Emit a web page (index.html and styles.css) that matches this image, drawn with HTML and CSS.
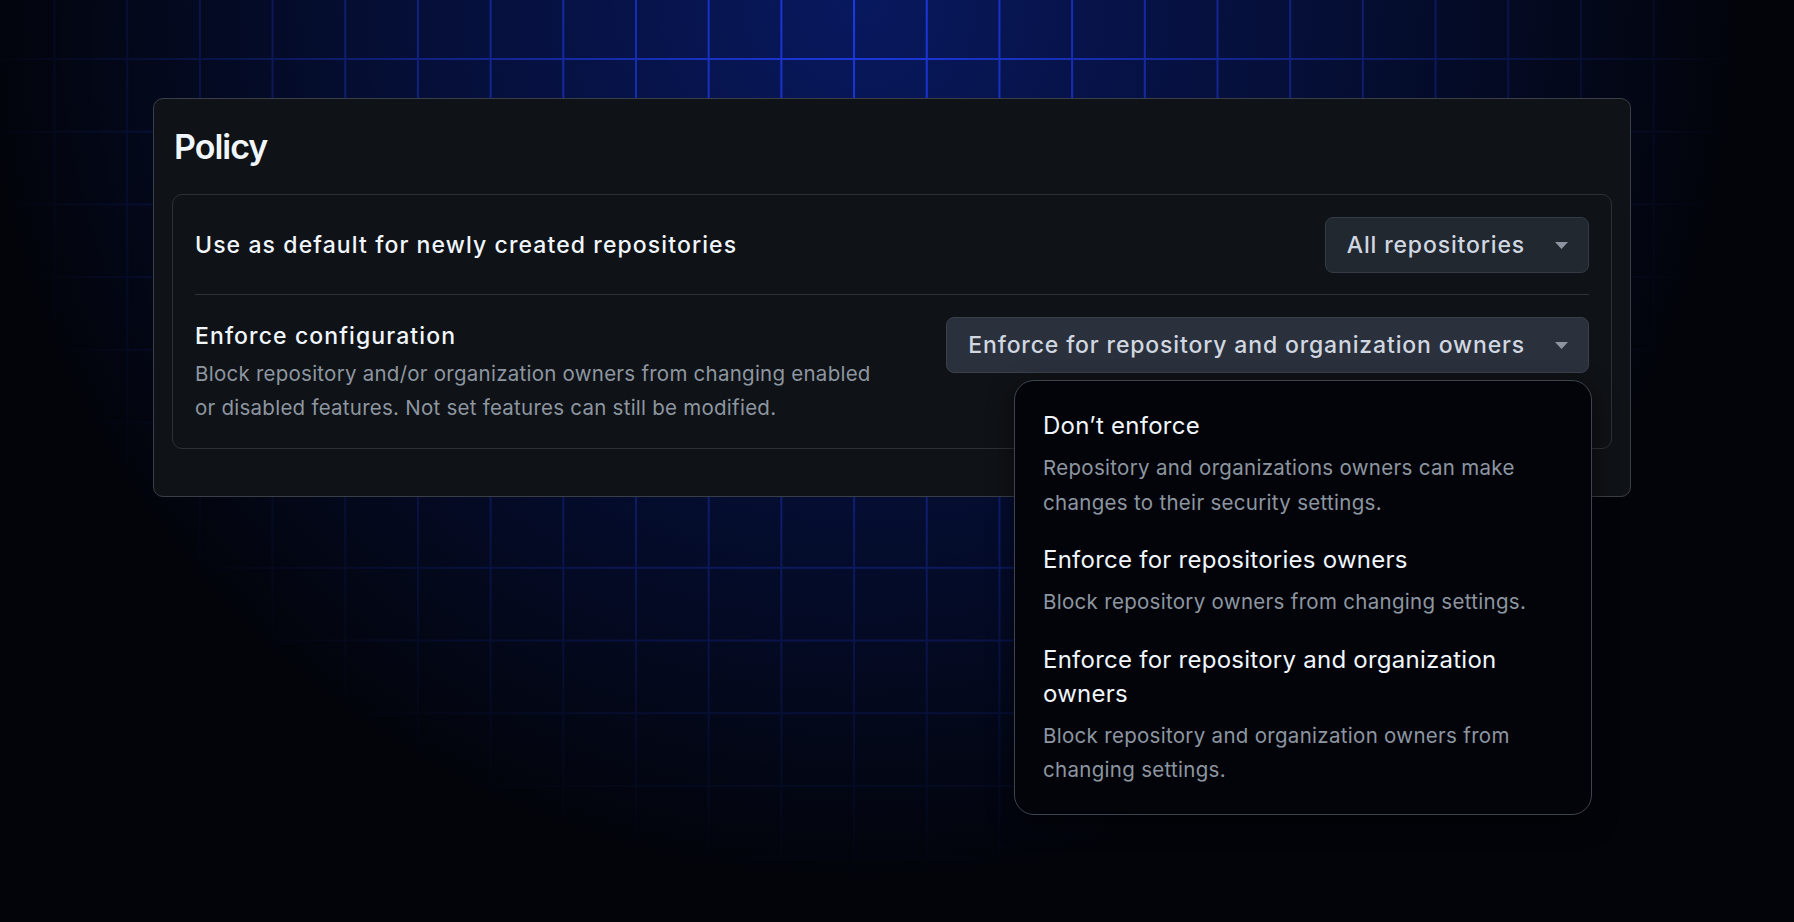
FILE: index.html
```html
<!DOCTYPE html>
<html lang="en">
<head>
    <meta charset="UTF-8">
    <meta name="viewport" content="width=device-width, initial-scale=1.0">
    <title>Policy</title>
    <link rel="stylesheet" href="styles.css">
</head>
<body>
    <div class="page">
        <section class="policy_card">
            <h2 class="policy_title">Policy</h2>
            <div class="policy_box">
                <div class="policy_row">
                    <div class="row_label">Use as default for newly created repositories</div>
                    <button class="select_btn">
                        All repositories
                        <svg class="caret" width="13" height="7" viewBox="0 0 13 7"><polygon points="0,0 13,0 6.5,7" fill="currentColor"/></svg>
                    </button>
                </div>
                <div class="policy_row policy_row--top">
                    <div class="row_text">
                        <div class="row_label">Enforce configuration</div>
                        <p class="row_desc">Block repository and/or organization owners from changing enabled or disabled features. Not set features can still be modified.</p>
                    </div>
                    <div class="select_wrap">
                        <button class="select_btn select_btn--open">
                            Enforce for repository and organization owners
                            <svg class="caret" width="13" height="7" viewBox="0 0 13 7"><polygon points="0,0 13,0 6.5,7" fill="currentColor"/></svg>
                        </button>
                        <ul class="select_menu">
                            <li class="menu_item">
                                <div class="menu_title">Don’t enforce</div>
                                <div class="menu_desc">Repository and organizations owners can make changes to their security settings.</div>
                            </li>
                            <li class="menu_item">
                                <div class="menu_title">Enforce for repositories owners</div>
                                <div class="menu_desc">Block repository owners from changing settings.</div>
                            </li>
                            <li class="menu_item">
                                <div class="menu_title">Enforce for repository and organization owners</div>
                                <div class="menu_desc">Block repository and organization owners from changing settings.</div>
                            </li>
                        </ul>
                    </div>
                </div>
            </div>
        </section>
    </div>
</body>
</html>
```

FILE: styles.css
```css
html, body {
    margin: 0;
    height: 100%;
}

body {
    font-family: Inter, "Noto Sans", sans-serif;
    color: #f0f6fc;
    background:
        radial-gradient(ellipse 1000px 1000px at 860px 0, rgba(2, 4, 10, 0) 0%, rgba(2, 4, 10, 0.5) 48%, #02040a 88%),
        linear-gradient(90deg, #1c3ae6 2px, transparent 2px) 53.5px 0 / 72.7px 72.7px,
        linear-gradient(180deg, #1c3ae6 2px, transparent 2px) 0 58px / 72.7px 72.7px,
        #08185e;
}

.page {
    padding: 98px 0 0 153px;
}

.policy_card {
    width: 1478px;
    box-sizing: border-box;
    padding: 27px 18px 47px;
    background: #0f1216;
    border: 1.5px solid #3a3f47;
    border-radius: 10px;
}

.policy_title {
    margin: 0 0 26px;
    padding-left: 2px;
    font-size: 34px;
    line-height: 42px;
    font-weight: 600;
    letter-spacing: -1px;
    color: #f0f6fc;
}

.policy_box {
    padding: 0 22px;
    border: 1.5px solid #2c3139;
    border-radius: 10px;
}

.policy_row {
    display: flex;
    justify-content: space-between;
    align-items: center;
    padding: 22px 0 21px;
    border-bottom: 1.5px solid #2c3139;
}

.policy_row--top {
    align-items: flex-start;
    padding: 22px 0 23px;
    border-bottom: none;
}

.row_text {
    padding-top: 2px;
}

.row_label {
    font-size: 23px;
    line-height: 34px;
    font-weight: 500;
    letter-spacing: 1.1px;
    color: #f0f6fc;
}

.row_desc {
    max-width: 690px;
    margin: 4px 0 0;
    font-size: 20.5px;
    line-height: 34px;
    letter-spacing: 0.25px;
    color: #8d96a0;
}

.select_wrap {
    position: relative;
}

.select_btn {
    display: flex;
    align-items: center;
    gap: 30px;
    height: 56px;
    box-sizing: border-box;
    padding: 0 20px 0 21px;
    font-family: inherit;
    font-size: 23px;
    font-weight: 500;
    letter-spacing: 0.85px;
    color: #d1d7e0;
    background: #212830;
    border: 1.5px solid #343b44;
    border-radius: 8px;
}

.select_btn--open {
    background: #2a313c;
    border-color: #3a414b;
}

.caret {
    color: #8d96a0;
    flex-shrink: 0;
}

.select_menu {
    position: absolute;
    top: calc(100% + 7px);
    right: -3px;
    width: 578px;
    box-sizing: border-box;
    margin: 0;
    padding: 28px 30px 26px 28px;
    list-style: none;
    background: #02040a;
    border: 1.5px solid #3d444d;
    border-radius: 20px;
    box-shadow: 0 8px 24px rgba(0, 0, 0, 0.5);
}

.menu_item + .menu_item {
    margin-top: 23px;
}

.menu_title {
    font-size: 24px;
    line-height: 34px;
    letter-spacing: 0.25px;
    color: #f0f6fc;
}

.menu_desc {
    margin-top: 8px;
    font-size: 20.5px;
    line-height: 34.5px;
    letter-spacing: 0.3px;
    color: #8d96a0;
}
```
